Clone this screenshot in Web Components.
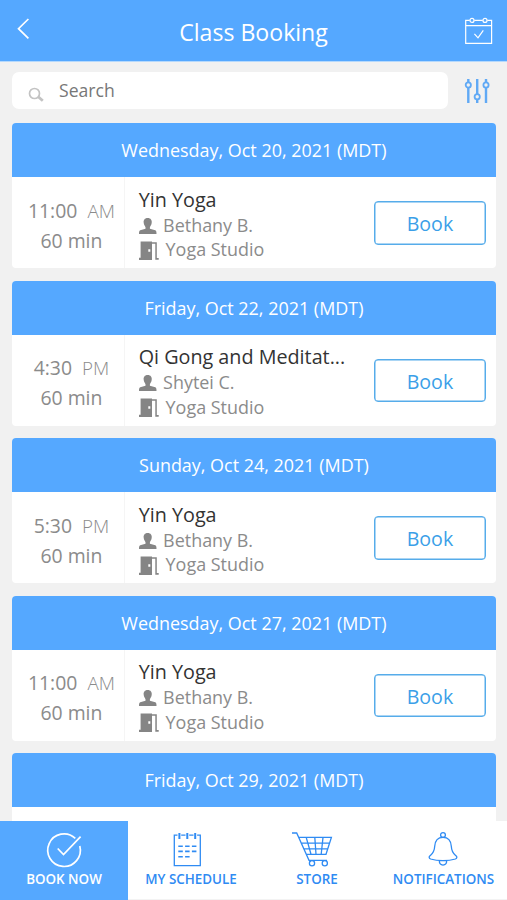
<!DOCTYPE html>
<html lang="en"><head><meta charset="utf-8"><title>Class Booking</title>
<style>html,body{margin:0;height:100%;overflow:hidden;background:#f1f1f1;font-family:"Open Sans","Noto Sans",sans-serif}</style></head>
<body><booking-app></booking-app>
<script>
const define = (name, html, setup) => customElements.define(name, class extends HTMLElement {
  constructor(){ super(); this.attachShadow({mode:'open'}); }
  connectedCallback(){ this.shadowRoot.innerHTML = html; if(setup) setup(this, this.shadowRoot); }
});

define('app-header', `<style>
:host{display:grid;grid-template-columns:60px 1fr 60px;height:61px;background:#55a8ff;color:#fff;border-bottom:1px solid #b5d9fd;box-sizing:content-box}
svg{display:block;fill:none;stroke:#fff}
.back{margin:18px 0 0 16px}.cal{margin:16px 0 0 17px}
h1{margin:2px 0 0;font-size:23.1px;font-weight:400;line-height:60px;text-align:center;white-space:nowrap}
</style>
<svg class="back" width="14" height="22" stroke-width="1.7"><path d="M12.4 1 2.5 10.7 12.4 20.4"/></svg>
<h1><slot></slot></h1>
<svg class="cal" width="30" height="30" stroke-width="1.2"><path d="M5.7 4.4H1.7V27.3H27.6V4.4H23.3M10.3 4.4H18.7M1.7 9.7H27.6M10.4 17.8l3.6 4 5.3-7.4"/><circle cx="8" cy="4.4" r="2"/><circle cx="21" cy="4.4" r="2"/></svg>`);

define('search-bar', `<style>
:host{display:flex;padding:10px 12px 0;height:37px}
.box{width:436px;height:36.5px;border-radius:7px;background:#fff;color:#777;font-size:17.6px;line-height:36px;display:flex}
.box svg{margin:15px 0 0 16px;width:17px;height:17px;fill:none;stroke:#c3c3c3}
span{margin-left:14px}
.filter{margin:6px 0 0 16px;fill:#f1f1f1;stroke:#60a9f5;stroke-width:1.8}
</style><div class="box"><svg><circle cx="6.5" cy="6.5" r="5" stroke-width="1.7"/><path d="m10.2 9.8 4.6 4" stroke-width="2.8"/></svg><span><slot></slot></span></div>
<svg class="filter" width="27" height="26"><path d="M4.3 1v24M13.2 1v24M22 1v24" stroke-width="2.4"/><circle cx="4.3" cy="7" r="2.6"/><circle cx="13.2" cy="18.8" r="2.6"/><circle cx="22" cy="7" r="2.6"/></svg>`);

define('book-button', `<style>
:host{display:block;box-sizing:border-box;width:111.5px;height:43.5px;border:1.5px solid #56acea;border-radius:4px;color:#3b9fe8;font-size:19.6px;line-height:43px;text-align:center;background:#fff;box-shadow:inset 0 0 0 .5px #56acea}
</style><slot></slot>`);

define('class-card', `<style>
:host{display:block;height:145px;width:484.5px;border-radius:4px;overflow:hidden;background:#fff;flex:none}
header{height:54px;line-height:54px;background:#55a8ff;color:#fff;text-align:center;font-size:17.95px;white-space:nowrap}
.row{display:grid;grid-template-columns:113px 1fr 111.5px;padding-right:10.5px;height:91px;color:#8b8b8b}
.time{border-right:1px solid #f5f5f5;text-align:center;font-size:19.4px;line-height:30px;padding:18.5px 0 0 7.5px;white-space:nowrap}
.ap{font-weight:300;font-size:18.8px;margin-left:5px}
.info{padding:9.5px 0 0 14px;font-size:17.95px;line-height:24.5px;white-space:nowrap}
.title{font-size:19.75px;line-height:26px;color:#333}
.line{display:flex;height:24.5px}
svg{fill:#858585;flex:none;width:19px;height:20px;margin-left:.4px}
.door{margin-top:3.5px}.person{margin-top:5px}
.studio{margin-left:7.5px}.teacher{margin-left:5px}
book-button{margin-top:24px}
</style><header></header><div class="row"><div class="time"><div><span class="clock"></span> <span class="ap"></span></div><div>60 min</div></div>
<div class="info"><div class="title"></div>
<div class="line"><svg class="person"><path d="M8.7 0c3.1 0 4.4 2.2 4 4.8-.1 2.3-1.3 3.1-1.8 4.4v1.6l5.4 1.5c1 .5 1.2 1.7 1.2 3.7H0c0-2 .2-3.2 1.2-3.7l5.3-1.5V9.2C6 7.9 4.8 7.1 4.7 4.8 4.3 2.2 5.6 0 8.7 0Z"/></svg><span class="teacher"></span></div>
<div class="line"><svg class="door" style="overflow:visible"><path fill-rule="evenodd" d="M1.6.5H13V19H0v-2.3h1.6ZM9.3 8.3v2.4h2V8.3Z"/><path d="M13 1.2h4.8v15.9h1.9v1.6h-3.4V2.8H13Z"/></svg><span class="studio">Yoga Studio</span></div></div>
<book-button>Book</book-button></div>`, (el, root) => {
  root.querySelector('header').textContent = el.getAttribute('date');
  if (!el.hasAttribute('time')) { root.querySelector('.row').replaceChildren(); return; }
  root.querySelector('.title').textContent = el.getAttribute('name');
  root.querySelector('.teacher').textContent = el.getAttribute('teacher');
  const [c,a] = el.getAttribute('time').split(' ');
  root.querySelector('.clock').textContent = c; root.querySelector('.ap').textContent = a;
});

const icons = {
check:'<path stroke-width="1.7" d="M29.3 6.4A16.3 16.3 0 1 0 33.8 14M11.7 16.5l5.8 6L34.6 4.7"/>',
pad:'<path d="M8.5 3.2H5.3v30.4h26V3.2h-3.2M12.2 3.2h4.3M20.2 3.2h4.3"/><path stroke-width="2" d="M10.4 1v6M18.3 1v6M26.2 1v6"/><path stroke-width="1.6" stroke-dasharray="4.5 2.3" d="M9.3 14.3h18.5M9.3 19.4h18.5M9.3 24.7h12"/>',
cart:'<path d="M0 1h4.7L17 28.3h18M6.6 5.4H39.4L34 22.3H14.2M8.9 11.1H37.5M11.5 16.8H35.7M14.2 5.4 19 22.3M22.8 5.4 24 22.3M31 5.4 29.2 22.3M17 28.3l1.7 1.3"/><circle cx="20" cy="31.2" r="2.6"/><circle cx="32.8" cy="31.2" r="2.6"/>',
bell:'<circle cx="19" cy="3" r="2.4"/><path d="M19 5.3c-5.8 0-8 4.2-8.3 9-.3 6.3-2.5 7.7-4.7 9.5-1.2 1-1.2 2.4.6 3.2 7 2.2 17.8 2.2 24.8 0 1.8-.8 1.8-2.2.6-3.2-2.2-1.8-4.4-3.2-4.7-9.5-.3-4.8-2.5-9-8.3-9ZM15.3 28.6c0 6 7.4 6 7.4 0"/>'};
define('tab-item', `<style>
:host{display:flex;flex-direction:column;align-items:center;color:#2f8bf3;font-size:13.4px;font-weight:600;line-height:18px;padding-top:10.5px;box-sizing:border-box;white-space:nowrap}
:host([active]){background:#55a8ff;color:#fff}
svg{display:block;width:40px;height:36px;fill:none;stroke:currentColor;stroke-width:1.3;overflow:visible}
:host([icon=check]) svg{margin-left:4px}
:host([icon=pad]) svg{margin-right:4px}
:host([icon=cart]) svg{margin-right:10px}
:host([icon=bell]) svg{margin-left:1px}
span{margin-top:2px}
</style><svg></svg><span><slot></slot></span>`, (el,root)=>{root.querySelector('svg').innerHTML=icons[el.getAttribute('icon')];});

define('tab-bar', `<style>
:host{display:grid;grid-template-columns:128px 126px 126px 127px;height:79px;background:linear-gradient(#fff 78px,#f3f3f3 78px)}
</style><tab-item icon="check" active>BOOK NOW</tab-item><tab-item icon="pad">MY SCHEDULE</tab-item><tab-item icon="cart">STORE</tab-item><tab-item icon="bell">NOTIFICATIONS</tab-item>`);

define('booking-app', `<style>
:host{display:grid;grid-template-rows:62px 61.3px 1fr 79px;width:507px;height:900px}
main{display:flex;flex-direction:column;gap:12.5px;padding-left:11.7px;overflow:hidden;min-height:0}
</style><app-header>Class Booking</app-header><search-bar>Search</search-bar><main>
<class-card date="Wednesday, Oct 20, 2021 (MDT)" time="11:00 AM" name="Yin Yoga" teacher="Bethany B."></class-card>
<class-card date="Friday, Oct 22, 2021 (MDT)" time="4:30 PM" name="Qi Gong and Meditat..." teacher="Shytei C."></class-card>
<class-card date="Sunday, Oct 24, 2021 (MDT)" time="5:30 PM" name="Yin Yoga" teacher="Bethany B."></class-card>
<class-card date="Wednesday, Oct 27, 2021 (MDT)" time="11:00 AM" name="Yin Yoga" teacher="Bethany B."></class-card>
<class-card date="Friday, Oct 29, 2021 (MDT)"></class-card>
</main><tab-bar></tab-bar>`);
</script></body></html>
